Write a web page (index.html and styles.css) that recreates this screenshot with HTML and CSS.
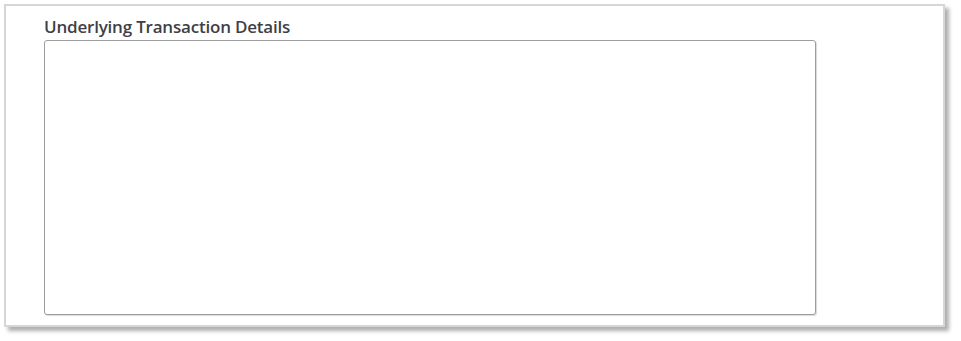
FILE: index.html
```html
<!DOCTYPE html>
<html>
<head>
<meta charset="utf-8">
<link rel="stylesheet" href="styles.css">
</head>
<body>
<div class="panel">
  <label class="field-label" for="details">Underlying Transaction Details</label>
  <textarea class="field-input" id="details"></textarea>
</div>
</body>
</html>
```
FILE: styles.css
```css
html, body {
  margin: 0;
  padding: 0;
  background: #ffffff;
}
body {
  box-sizing: border-box;
  min-height: 341px;
  padding: 4px 0 14px 4px;
  font-family: "Open Sans", "Liberation Sans", sans-serif;
}
.panel {
  width: 941px;
  height: 323px;
  box-sizing: border-box;
  border: 2px solid #d6d6d6;
  background: #ffffff;
  box-shadow: 4px 4px 4px rgba(0, 0, 0, 0.32);
  padding: 11px 0 0 38px;
  display: flex;
  flex-direction: column;
}
.field-label {
  font-size: 17px;
  font-weight: 600;
  color: #3f3f46;
  line-height: 20px;
  letter-spacing: -0.2px;
  height: 23px;
}
.field-input {
  width: 772px;
  height: 275px;
  box-sizing: border-box;
  border: 1px solid #9e9e9e;
  border-radius: 3px;
  box-shadow: 1px 1px 1px rgba(0,0,0,0.15);
  resize: none;
  margin: 0;
  padding: 4px;
  background: #fff;
  outline: none;
}
```
